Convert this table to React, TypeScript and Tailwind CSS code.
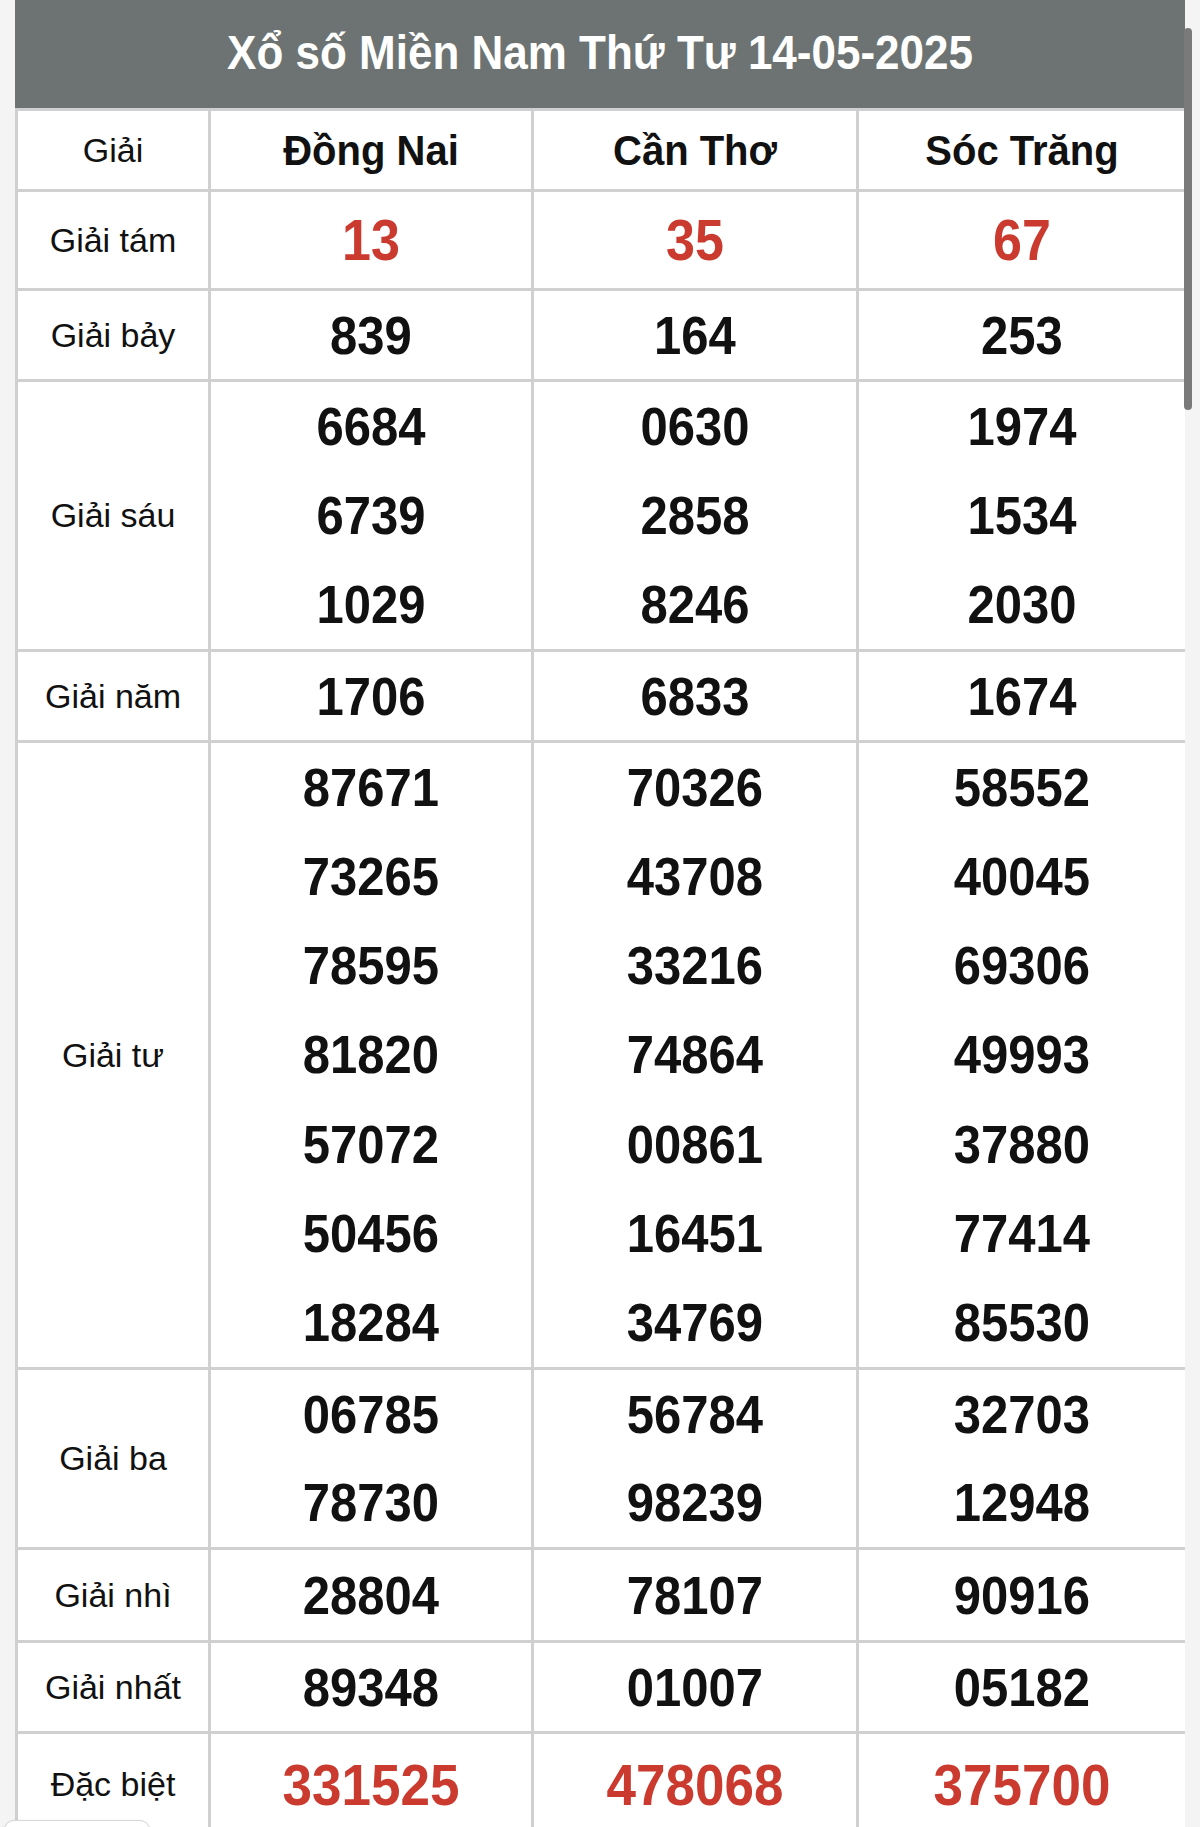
import React from "react";

type Row = {
  label: string;
  height: number;
  lines: [string, string, string][];
  tone?: "red" | "special";
};

const rows: Row[] = [
  { label: "Giải tám", height: 96, lines: [["13", "35", "67"]], tone: "red" },
  { label: "Giải bảy", height: 88, lines: [["839", "164", "253"]] },
  {
    label: "Giải sáu",
    height: 267,
    lines: [
      ["6684", "0630", "1974"],
      ["6739", "2858", "1534"],
      ["1029", "8246", "2030"],
    ],
  },
  { label: "Giải năm", height: 88, lines: [["1706", "6833", "1674"]] },
  {
    label: "Giải tư",
    height: 624,
    lines: [
      ["87671", "70326", "58552"],
      ["73265", "43708", "40045"],
      ["78595", "33216", "69306"],
      ["81820", "74864", "49993"],
      ["57072", "00861", "37880"],
      ["50456", "16451", "77414"],
      ["18284", "34769", "85530"],
    ],
  },
  {
    label: "Giải ba",
    height: 177,
    lines: [
      ["06785", "56784", "32703"],
      ["78730", "98239", "12948"],
    ],
  },
  { label: "Giải nhì", height: 90, lines: [["28804", "78107", "90916"]] },
  { label: "Giải nhất", height: 88, lines: [["89348", "01007", "05182"]] },
  { label: "Đặc biệt", height: 100, lines: [["331525", "478068", "375700"]], tone: "special" },
];

const provinces = ["Đồng Nai", "Cần Thơ", "Sóc Trăng"];

function NumberCell({ row, col }: { row: Row; col: number }) {
  const color =
    row.tone === "red"
      ? "text-[52px] text-[#cb3a2e]"
      : row.tone === "special"
        ? "text-[53px] text-[#cb3a2e]"
        : "text-[49px] text-[#111]";
  return (
    <div className="flex flex-col justify-center bg-white" style={{ height: row.height }}>
      {row.lines.map((line, i) => (
        <div key={i} className={`flex flex-1 items-center justify-center font-bold leading-none ${color}`}>
          <span className="inline-block scale-y-[1.1]">{line[col]}</span>
        </div>
      ))}
    </div>
  );
}

export default function App() {
  return (
    <div className="relative h-[1827px] overflow-hidden bg-[#f4f4f4] [font-family:'Liberation_Sans',Arial,sans-serif]">
      <div className="ml-[15px] w-[1170px]">
        <div className="flex h-[108px] items-center justify-center pb-[2px] bg-[#6c7372] text-[44px] font-bold text-white">
          <span className="inline-block scale-y-[1.08]">Xổ số Miền Nam Thứ Tư 14-05-2025</span>
        </div>
        <div className="grid grid-cols-[190px_320px_322px_1fr] gap-[3px] border-t-[3px] border-l-[3px] border-[#d0d0d0] bg-[#d0d0d0]">
          <div className="flex h-[78px] items-center justify-center bg-white text-[34px] text-[#111]">Giải</div>
          {provinces.map((p) => (
            <div key={p} className="flex h-[78px] items-center justify-center bg-white text-[40px] font-bold text-[#111]">
              <span className="inline-block scale-y-[1.05]">{p}</span>
            </div>
          ))}
          {rows.map((row) => (
            <React.Fragment key={row.label}>
              <div
                className="flex items-center justify-center bg-white text-[34px] text-[#111]"
                style={{ height: row.height }}
              >
                {row.label}
              </div>
              {[0, 1, 2].map((c) => (
                <NumberCell key={c} row={row} col={c} />
              ))}
            </React.Fragment>
          ))}
        </div>
      </div>
      <div className="absolute top-[28px] left-[1184px] h-[382px] w-[8px] rounded-full bg-[#7a7a7a]" />
      <div className="absolute top-[1820px] left-[4px] h-[40px] w-[146px] rounded-[10px] border border-[#d6d6d6] bg-white shadow" />
    </div>
  );
}
